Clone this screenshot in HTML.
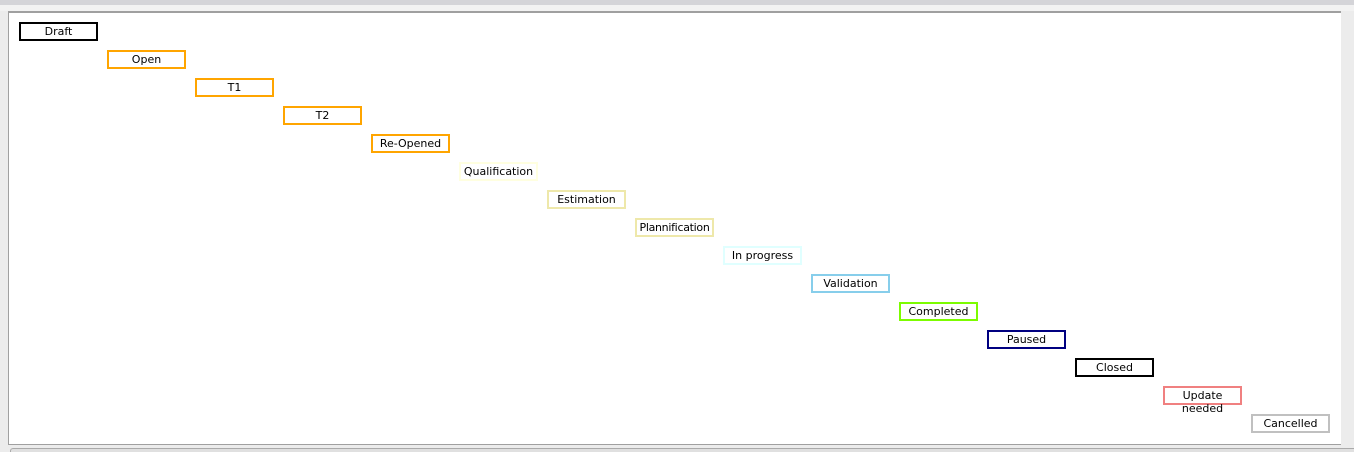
<!DOCTYPE html><html><head><style>
body{margin:0;width:1354px;height:451px;background:#ececec;position:relative;overflow:hidden;font-family:"DejaVu Sans","Liberation Sans",sans-serif;font-size:11px;}
#top{position:absolute;left:0;top:0;width:1354px;height:5px;background:#d4d4d8}
#top2{position:absolute;left:0;top:5px;width:1354px;height:6px;background:#f2f2f2}
#panel{position:absolute;left:8px;top:11px;width:1332px;height:431px;background:#fff;border-left:1px solid #a0a0a0;border-top:2px solid #a0a0a0;border-bottom:1px solid #a0a0a0}
#bot{position:absolute;left:10px;top:448px;width:1344px;height:3px;background:#e0e0e0;border-top:1px solid #aaa;border-left:1px solid #aaa;border-radius:3px 0 0 0}
.b{position:absolute;width:75px;height:15px;border:2px solid;background:#fff;text-align:center;line-height:15px;color:#000;white-space:nowrap}
</style></head><body>
<div id="top"></div><div id="top2"></div><div id="panel"></div><div id="bot"></div>
<div class="b" style="left:19px;top:22px;border-color:#000">Draft</div>
<div class="b" style="left:107px;top:50px;border-color:orange">Open</div>
<div class="b" style="left:195px;top:78px;border-color:orange">T1</div>
<div class="b" style="left:283px;top:106px;border-color:orange">T2</div>
<div class="b" style="left:371px;top:134px;border-color:orange">Re-Opened</div>
<div class="b" style="left:459px;top:162px;border-color:#ffffe0">Qualification</div>
<div class="b" style="left:547px;top:190px;border-color:#eee8aa">Estimation</div>
<div class="b" style="left:635px;top:218px;border-color:#eee8aa;letter-spacing:-0.3px">Plannification</div>
<div class="b" style="left:723px;top:246px;border-color:#e0ffff">In progress</div>
<div class="b" style="left:811px;top:274px;border-color:#87ceeb">Validation</div>
<div class="b" style="left:899px;top:302px;border-color:#7cfc00">Completed</div>
<div class="b" style="left:987px;top:330px;border-color:#000080">Paused</div>
<div class="b" style="left:1075px;top:358px;border-color:#000">Closed</div>
<div class="b" style="left:1163px;top:386px;border-color:#f08080;overflow:visible;line-height:13px;padding-top:1px;height:14px">Update<br>needed</div>
<div class="b" style="left:1251px;top:414px;border-color:#c0c0c0">Cancelled</div>
</body></html>
